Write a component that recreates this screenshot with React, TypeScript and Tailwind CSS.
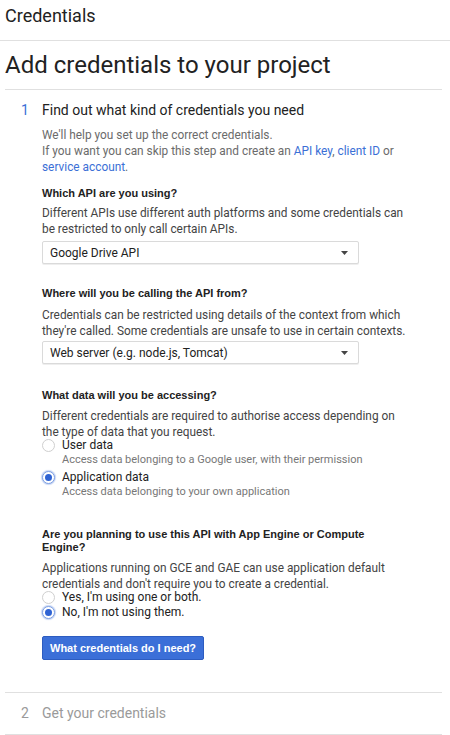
import React from "react";

function Radio({ checked }: { checked?: boolean }) {
  return (
    <span
      className={
        "mt-[1px] flex h-[13px] w-[13px] shrink-0 items-center justify-center rounded-full border bg-white " +
        (checked ? "border-[#7d9fe3] shadow-[0_0_1px_1px_#c6d5f4]" : "border-[#cfcfcf]")
      }
    >
      {checked && <span className="h-[7px] w-[7px] rounded-full bg-[#2f63d3]" />}
    </span>
  );
}

function Select({ value }: { value: string }) {
  return (
    <div className="flex h-[23px] w-[317px] items-center justify-between rounded-[2px] border border-[#dadada] bg-white pl-[7px] pr-[10px] text-[12px] text-[#222] shadow-[0_1px_0_#eee]">
      <span>{value}</span>
      <svg width="7" height="4" viewBox="0 0 7 4">
        <path d="M0 0 L7 0 L3.5 4 Z" fill="#444" />
      </svg>
    </div>
  );
}

const bold = { fontFamily: '"Liberation Sans", Arial, sans-serif' };

export default function App() {
  return (
    <div
      className="h-[735px] w-[450px] overflow-hidden bg-white"
      style={{ fontFamily: 'Roboto, "Liberation Sans", Arial, sans-serif' }}
    >
      <div className="h-[40px] px-[5px] pt-[5px] text-[18px] leading-[22px] text-[#222]">Credentials</div>
      <div className="h-[1px] bg-[#e0e0e0]" />
      <div className="ml-[5px] mr-[8px] border-b border-[#e0e0e0]">
        <div className="flex h-[48px] items-center text-[24px] text-[#222]">Add credentials to your project</div>
      </div>
      <div className="ml-[5px] mr-[8px] border-b border-[#e0e0e0] pb-[32px]">
        <div className="flex pt-[10px] text-[14px] leading-[20px] text-[#222]">
          <span className="w-[37px] pl-[16px] text-[#3b6fd6]">1</span>
          <span>Find out what kind of credentials you need</span>
        </div>
        <div className="pl-[37px] text-[11.85px] leading-[16px] text-[#444]">
          <div className="mt-[7px] text-[#6b6b6b]">
            <div>We'll help you set up the correct credentials.</div>
            <div>
              If you want you can skip this step and create an{" "}
              <span className="text-[#3b6fd6]">API key</span>, <span className="text-[#3b6fd6]">client ID</span> or
            </div>
            <div>
              <span className="text-[#3b6fd6]">service account</span>.
            </div>
          </div>

          <div className="mt-[10px] text-[11px] font-bold leading-[16px] text-[#222]" style={bold}>
            Which API are you using?
          </div>
          <div className="mt-[4px] whitespace-nowrap">
            Different APIs use different auth platforms and some credentials can
            <br />
            be restricted to only call certain APIs.
          </div>
          <div className="mt-[4px]">
            <Select value="Google Drive API" />
          </div>

          <div className="mt-[21px] text-[11px] font-bold leading-[16px] text-[#222]" style={bold}>
            Where will you be calling the API from?
          </div>
          <div className="mt-[6px] whitespace-nowrap">
            Credentials can be restricted using details of the context from which
            <br />
            they're called. Some credentials are unsafe to use in certain contexts.
          </div>
          <div className="mt-[2px]">
            <Select value="Web server (e.g. node.js, Tomcat)" />
          </div>

          <div className="mt-[23px] text-[11px] font-bold leading-[16px] text-[#222]" style={bold}>
            What data will you be accessing?
          </div>
          <div className="mt-[5px] whitespace-nowrap leading-[16px]">
            Different credentials are required to authorise access depending on
            <br />
            <span className="block h-[13px] leading-[16px]">the type of data that you request.</span>
          </div>
          <div className="mt-[1px]">
            <div className="flex gap-[7px]">
              <Radio />
              <div>
                <div className="text-[12px] leading-[14px] text-[#222]">User data</div>
                <div className="mt-[1px] text-[11px] leading-[14px] text-[#777]">
                  Access data belonging to a Google user, with their permission
                </div>
              </div>
            </div>
            <div className="mt-[3px] flex gap-[7px]">
              <Radio checked />
              <div>
                <div className="text-[12px] leading-[14px] text-[#222]">Application data</div>
                <div className="mt-[1px] text-[11px] leading-[14px] text-[#777]">
                  Access data belonging to your own application
                </div>
              </div>
            </div>
          </div>

          <div className="mt-[29px] whitespace-nowrap text-[11px] font-bold leading-[13px] text-[#222]" style={bold}>
            Are you planning to use this API with App Engine or Compute
            <br />
            Engine?
          </div>
          <div className="mt-[6px] whitespace-nowrap">
            Applications running on GCE and GAE can use application default
            <br />
            <span className="block h-[14px] leading-[16px]">credentials and don't require you to create a credential.</span>
          </div>
          <div className="mt-[0px]">
            <div className="flex gap-[7px]">
              <Radio />
              <div className="text-[12px] leading-[14px] text-[#222]">Yes, I'm using one or both.</div>
            </div>
            <div className="mt-[1px] flex gap-[7px]">
              <Radio checked />
              <div className="text-[12px] leading-[14px] text-[#222]">No, I'm not using them.</div>
            </div>
          </div>

          <button
            className="mt-[17px] flex h-[24px] items-center rounded-[2px] border border-[#2d5cc0] bg-[#3b6fd8] px-[7px] text-[11px] font-bold text-white"
            style={bold}
          >
            What credentials do I need?
          </button>
        </div>
      </div>
      <div className="ml-[5px] mr-[8px] border-b border-[#e0e0e0]">
        <div className="flex h-[41px] items-center text-[14px] text-[#9a9a9a]">
          <span className="w-[37px] pl-[16px]">2</span>
          <span>Get your credentials</span>
        </div>
      </div>
    </div>
  );
}
